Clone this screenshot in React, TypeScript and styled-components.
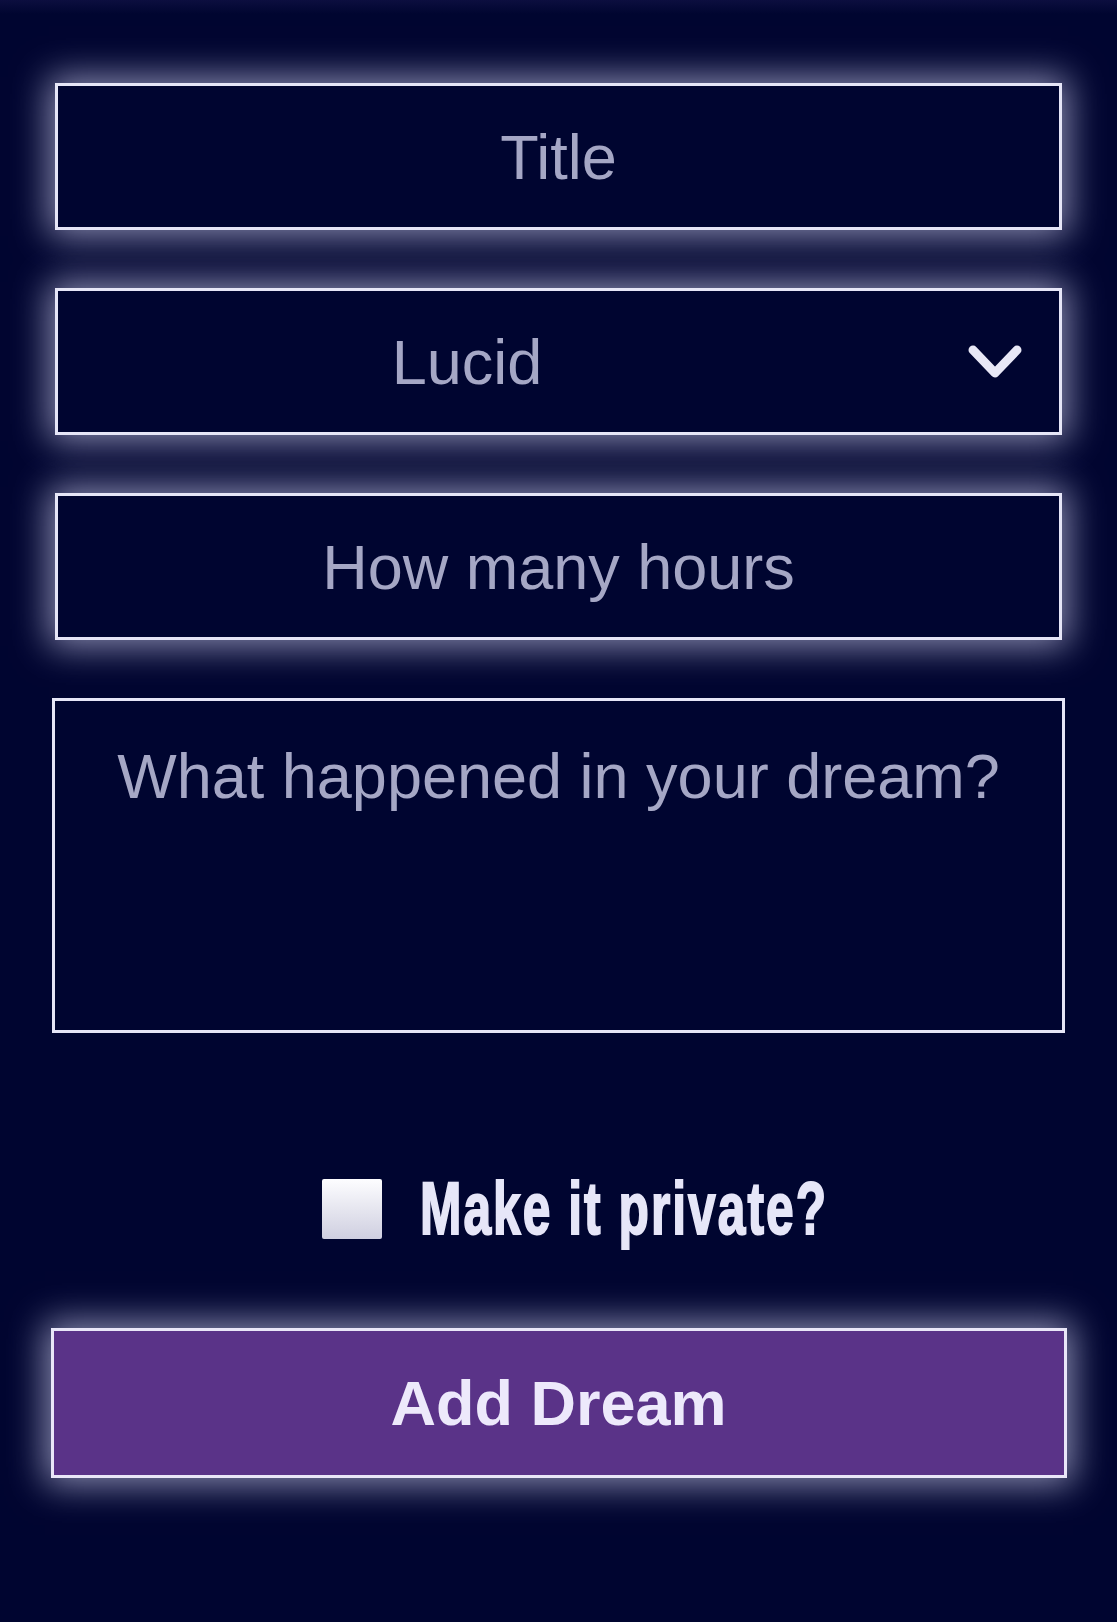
import React from "react";
import styled, { createGlobalStyle } from "styled-components";

const Global = createGlobalStyle`
  html, body { margin: 0; padding: 0; background: #000530; }
  * { box-sizing: border-box; }
`;

const Page = styled.main`
  min-height: 1622px;
  background: linear-gradient(#0c0e3f 0px, #000530 14px, #000530 100%);
  display: flex;
  flex-direction: column;
  align-items: center;
  padding-top: 83px;
  font-family: "Liberation Sans", Arial, sans-serif;
`;

const Form = styled.form`
  display: flex;
  flex-direction: column;
  align-items: center;
  gap: 58px;
`;

const glow = `0 0 34px 6px rgba(225, 225, 255, 0.62)`;

const Field = styled.input`
  width: 1007px;
  height: 147px;
  border: 3px solid #e6e6f7;
  background: #000530;
  color: #e6e6f7;
  font-family: "Liberation Sans", Arial, sans-serif;
  font-size: 63px;
  text-align: center;
  box-shadow: ${glow};
  outline: none;
  padding: 0 20px;
  &::placeholder {
    color: #a5a7c5;
    opacity: 1;
  }
`;

const SelectWrap = styled.div`
  position: relative;
  width: 1007px;
  height: 147px;
`;

const Select = styled.select`
  width: 100%;
  height: 100%;
  appearance: none;
  -webkit-appearance: none;
  border: 3px solid #e6e6f7;
  border-radius: 0;
  background: #000530;
  color: #a5a7c5;
  font-family: "Liberation Sans", Arial, sans-serif;
  font-size: 63px;
  text-align: center;
  text-align-last: center;
  padding: 0 183px 0 0;
  box-shadow: ${glow};
  outline: none;
`;

const Chevron = styled.svg`
  position: absolute;
  right: 37px;
  top: 50%;
  transform: translateY(-50%);
  pointer-events: none;
`;

const Story = styled.textarea`
  width: 1013px;
  height: 335px;
  border: 3px solid #e6e6f7;
  background: #000530;
  color: #e6e6f7;
  font-family: "Liberation Sans", Arial, sans-serif;
  font-size: 63px;
  text-align: center;
  padding: 39px 20px;
  resize: none;
  outline: none;
  &::placeholder {
    color: #a5a7c5;
    opacity: 1;
  }
`;

const CheckRow = styled.label`
  display: flex;
  align-items: center;
  gap: 38px;
  height: 60px;
  margin-top: 88px;
  padding-left: 30px;
`;

const Box = styled.input`
  appearance: none;
  -webkit-appearance: none;
  margin: 0;
  width: 60px;
  height: 60px;
  border-radius: 2px;
  background: linear-gradient(#fdfdff, #cfcfe0);
  border: none;
`;

const CheckText = styled.span`
  display: inline-block;
  width: 405px;
  font-family: "Liberation Sans", sans-serif;
  font-weight: 700;
  font-size: 74px;
  line-height: 60px;
  color: #e6e6f8;
  white-space: nowrap;
  letter-spacing: 3px;
  -webkit-text-stroke: 2px #e6e6f8;
  transform: scaleX(0.672);
  transform-origin: left center;
`;

const Submit = styled.button`
  width: 1016px;
  height: 150px;
  margin-top: 31px;
  background: #5a3388;
  border: 3px solid #e9e6f8;
  color: #ede9fb;
  font-family: "Liberation Sans", Arial, sans-serif;
  font-weight: 700;
  font-size: 63px;
  box-shadow: ${glow};
  cursor: pointer;
`;

export default function App() {
  return (
    <>
      <Global />
      <Page>
        <Form onSubmit={(e) => e.preventDefault()}>
          <Field placeholder="Title" />
          <SelectWrap>
            <Select defaultValue="Lucid">
              <option>Lucid</option>
              <option>Nightmare</option>
              <option>Normal</option>
            </Select>
            <Chevron width="60" height="42" viewBox="0 0 60 42">
              <polyline
                points="8,9 30,32 52,9"
                fill="none"
                stroke="#e8e8f6"
                strokeWidth="9"
                strokeLinecap="round"
                strokeLinejoin="round"
              />
            </Chevron>
          </SelectWrap>
          <Field placeholder="How many hours" />
          <Story placeholder="What happened in your dream?" />
          <CheckRow>
            <Box type="checkbox" />
            <CheckText>Make it private?</CheckText>
          </CheckRow>
          <Submit type="submit">Add Dream</Submit>
        </Form>
      </Page>
    </>
  );
}
